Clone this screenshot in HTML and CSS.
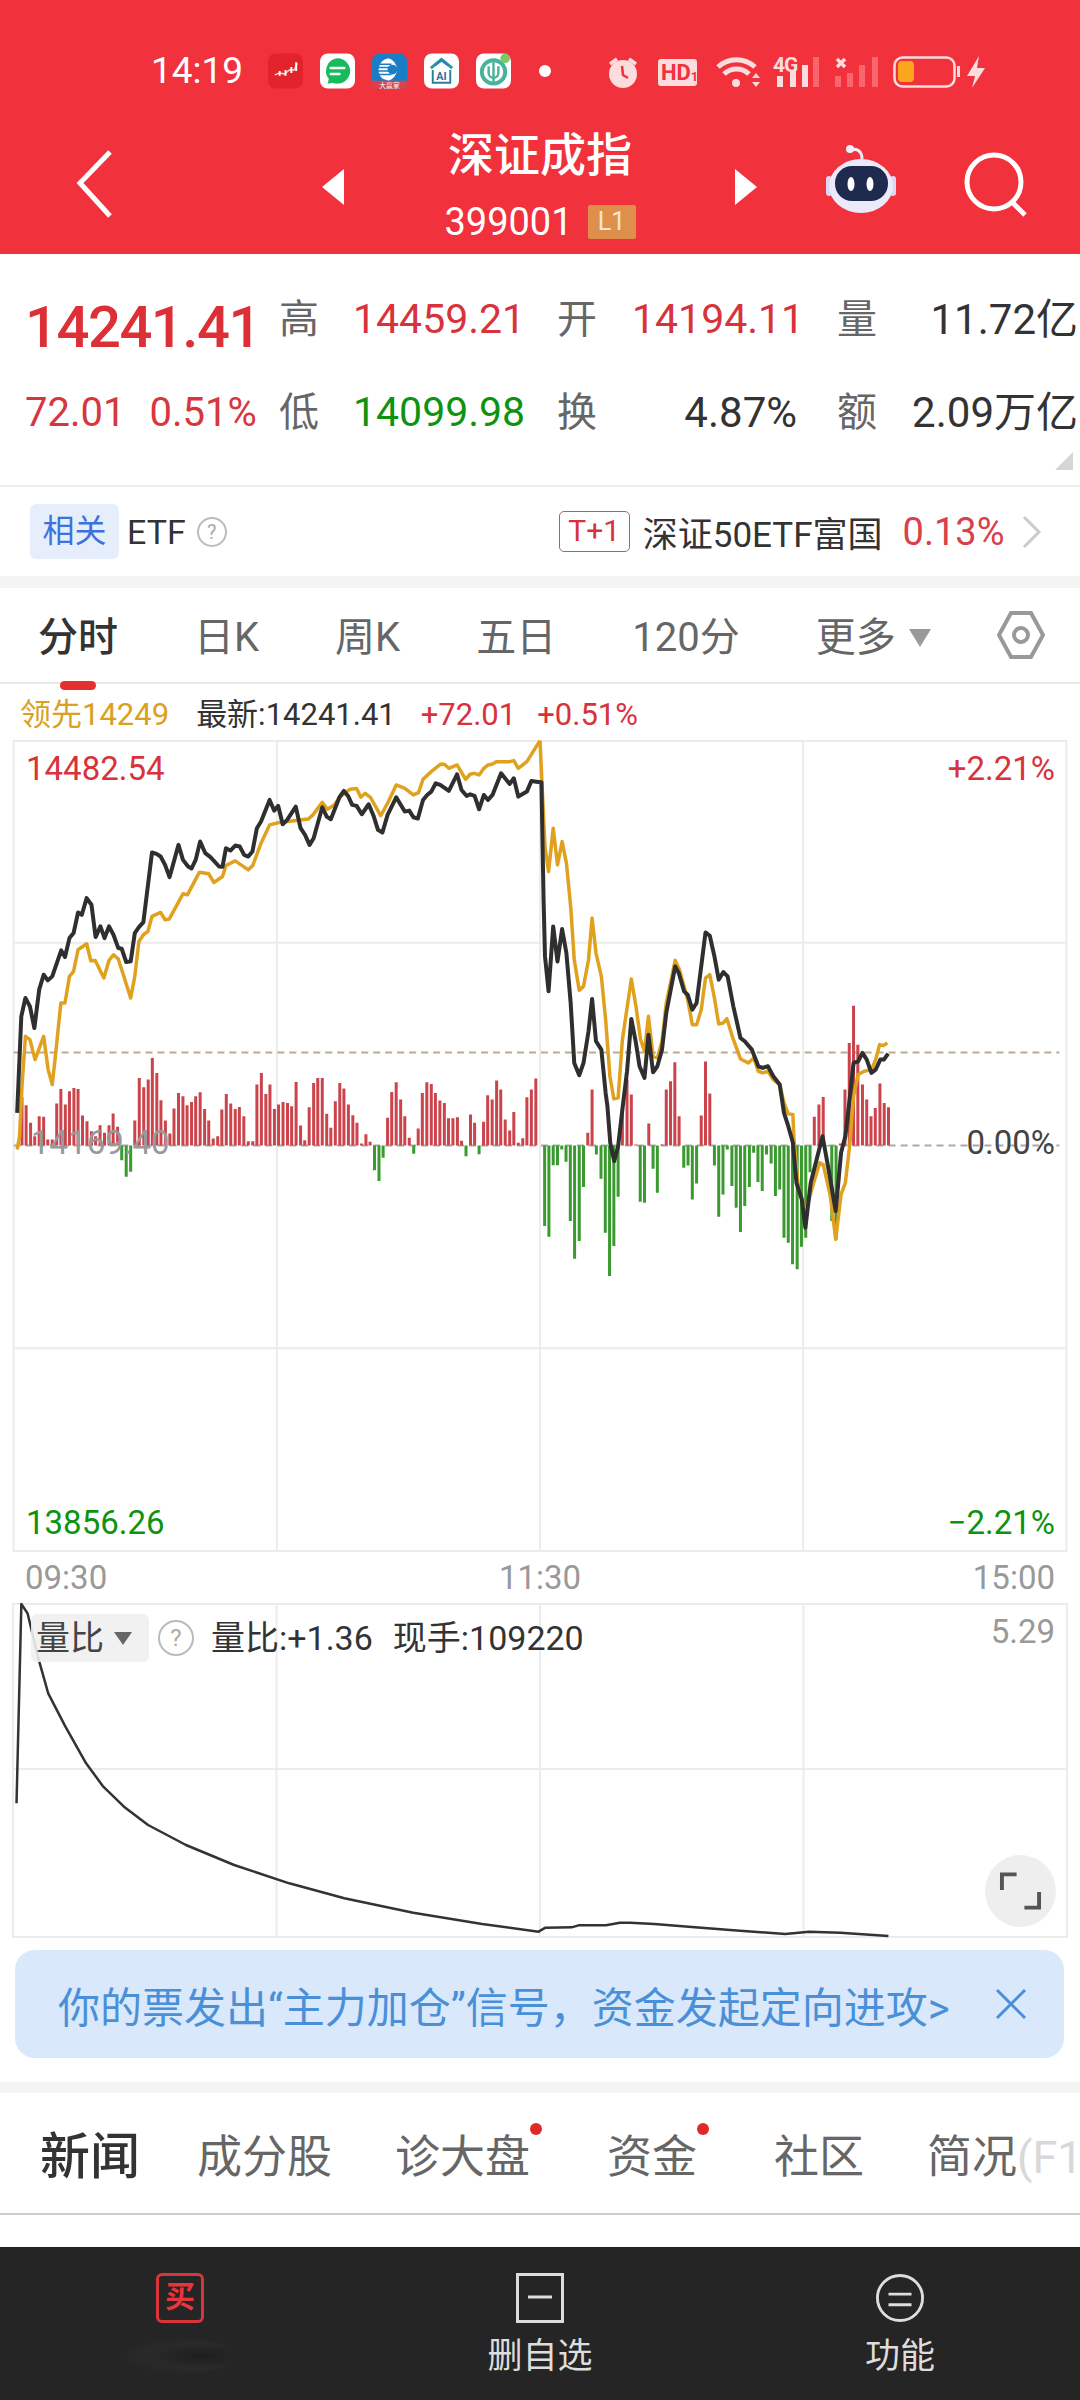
FILE: index.html
```html
<!DOCTYPE html>
<html lang="zh-CN">
<head>
<meta charset="utf-8">
<title>深证成指</title>
<link rel="stylesheet" href="styles.css">
</head>
<body>
<div class="page">
  <header class="hero">
    <div class="status">
      <span class="clock">14:19</span>
      <div class="apps">
        <svg class="app" viewBox="0 0 36 36"><rect width="36" height="36" rx="8" class="a-red"/><path d="M7 22l5-2 5 1 5-4 5 0 3-7" class="a-trend"/><path d="M12 18v5M18 17v6M24 14v6M29 9v9" class="a-candle"/></svg>
        <svg class="app" viewBox="0 0 36 36"><rect width="36" height="36" rx="8" class="a-white"/><path d="M18 5a13 13 0 1 1-5 25l-5 1 1-5a13 13 0 0 1 9-21z" class="a-green"/><path d="M11 15h14M11 21h9" class="a-wline"/></svg>
        <svg class="app" viewBox="0 0 36 36"><rect width="36" height="36" rx="8" class="a-blue"/><path d="M17 5a12 12 0 0 1 0 23l-6-2a12 12 0 0 1 6-21z" class="a-whitefill"/><path d="M7 11h13M6 14.500h13M6 18h14M7 21.500h13" class="a-bline"/><circle cx="21" cy="16.500" r="5" class="a-bdot"/><rect y="28" width="36" height="8" class="a-strip"/><text x="18" y="35" class="a-tiny">大赢家</text></svg>
        <svg class="app" viewBox="0 0 36 36"><rect width="36" height="36" rx="8" class="a-white"/><path d="M7 15L18 6l11 9" class="a-roof"/><path d="M11 12l7-5 7 5" class="a-roof2"/><path d="M9 17v13h18V17" class="a-wall"/><text x="18" y="27" class="a-ai">AI</text></svg>
        <svg class="app" viewBox="0 0 36 36"><rect width="36" height="36" rx="8" class="a-white"/><circle cx="18" cy="19" r="12" class="a-ring"/><path d="M18 9v21M13 13v7a5 5 0 0 0 10 0v-7" class="a-ringin"/><circle cx="30" cy="5" r="5" class="a-gdot"/></svg>
      </div>
      <span class="status-dot"></span>
      <svg class="sys" viewBox="598 40 400 60">
        <circle cx="623" cy="73" r="14" class="pale"/>
        <path d="M610 63l7-5M636 63l-7-5" class="pale-line"/>
        <path d="M622 65l1 9 5 3" class="hand"/>
        <rect x="658" y="58" width="39" height="27" rx="3" class="pale"/>
        <text x="661" y="79" class="hd">HD<tspan class="hd1" dy="1">1</tspan></text>
        <path d="M718 66a27 27 0 0 1 37 0M724 73a18 18 0 0 1 25 0" class="wifi"/>
        <circle cx="736" cy="82" r="4" class="pale"/>
        <path d="M752 77l4-5 4 5zM752 81l4 5 4-5z" class="pale"/>
        <text x="773" y="71" class="g4">4G</text>
        <rect x="777" y="75" width="6" height="11" class="pale"/>
        <rect x="790" y="70" width="6" height="16" class="pale"/>
        <rect x="802" y="64" width="6" height="22" class="pale"/>
        <rect x="813" y="56" width="6" height="30" class="faint"/>
        <path d="M837 58l8 8M845 58l-8 8" class="pale-line"/>
        <rect x="835" y="75" width="6" height="11" class="faint"/>
        <rect x="847" y="72" width="6" height="14" class="faint"/>
        <rect x="859" y="64" width="6" height="22" class="faint"/>
        <rect x="872" y="56" width="6" height="30" class="faint"/>
        <rect x="894.500" y="56.500" width="60" height="29" rx="8" class="batt"/>
        <rect x="898" y="60" width="16" height="21" rx="4" class="batt-fill"/>
        <rect x="957" y="65" width="3" height="11" class="pale"/>
        <path d="M979 55l-12 20h8l-3 12 13-20h-8z" class="pale"/>
      </svg>
    </div>
    <nav class="nav">
      <svg class="back" viewBox="0 0 44 70"><path d="M38 3L8 34l30 33" class="ico-w"/></svg>
      <svg class="tri tri-l" viewBox="0 0 22 36"><path d="M22 0v36L0 18z"/></svg>
      <div class="title-block">
        <div class="title">深证成指</div>
        <div class="code-row"><span class="code">399001</span><span class="lv">L1</span></div>
      </div>
      <svg class="tri tri-r" viewBox="0 0 22 36"><path d="M0 0v36l22-18z"/></svg>
      <svg class="robot" viewBox="825 145 72 70">
        <path d="M851 150c6-2 11 1 11 9" class="rb-ant"/>
        <circle cx="850" cy="149" r="4" class="rb-ball"/>
        <rect x="826" y="176" width="6" height="20" rx="3" class="rb-ear"/>
        <rect x="890" y="176" width="6" height="20" rx="3" class="rb-ear"/>
        <ellipse cx="861" cy="186" rx="32" ry="27" class="rb-body"/>
        <rect x="835" y="166" width="53" height="35" rx="17" class="rb-face"/>
        <ellipse cx="851" cy="184" rx="3.500" ry="7" class="rb-eye"/>
        <ellipse cx="870" cy="184" rx="3.500" ry="7" class="rb-eye"/>
      </svg>
      <svg class="search" viewBox="960 150 72 72"><circle cx="994" cy="184" r="27" class="ico-w"/><path d="M1012 204l13 13" class="ico-w"/></svg>
    </nav>
  </header>

  <section class="quote">
    <div class="price">14241.41</div>
    <div class="lab">高</div><div class="val up">14459.21</div>
    <div class="lab">开</div><div class="val up">14194.11</div>
    <div class="lab lab-last">量</div><div class="val end dark">11.72亿</div>
    <div class="change"><span>72.01</span><span>0.51%</span></div>
    <div class="lab">低</div><div class="val down">14099.98</div>
    <div class="lab">换</div><div class="val end dark">4.87%</div>
    <div class="lab lab-last">额</div><div class="val end dark">2.09万亿</div>
    <span class="corner"></span>
  </section>

  <section class="etf">
    <span class="chip">相关</span>
    <span class="etf-name">ETF</span>
    <span class="help">?</span>
    <span class="tplus">T+1</span>
    <span class="fund">深证50ETF富国</span>
    <span class="fund-pct">0.13%</span>
    <svg class="chev" viewBox="0 0 20 34"><path d="M2 2l15 15L2 32"/></svg>
  </section>
  <div class="band"></div>

  <nav class="period">
    <span class="p-tab active">分时</span>
    <span class="p-tab">日K</span>
    <span class="p-tab">周K</span>
    <span class="p-tab">五日</span>
    <span class="p-tab">120分</span>
    <span class="p-tab">更多</span>
    <span class="more-tri"></span>
    <svg class="gear" viewBox="0 0 48 50"><path d="M14 3h20l12 22-12 22H14L2 25z"/><circle cx="24" cy="25" r="7"/></svg>
  </nav>

  <div class="legend">
    <span class="gold">领先14249</span>
    <span class="latest">最新:14241.41</span>
    <span class="up l-change">+72.01</span>
    <span class="up l-pct">+0.51%</span>
  </div>

  <div class="chart main-chart">
    <svg class="plot" viewBox="0 740 1080 814">
      <path d="M13 741H1067M13 943H1067M13 1349H1067M13 1552H1067M13 740V1553M276.500 740V1553M540 740V1553M803.500 740V1553M1067 740V1553" class="grid"/>
      <path d="M13 1053H1060" class="dash-tan"/>
      <path d="M13 1146H1060" class="dash-grey"/>
      <g transform="translate(0 1040) scale(.34436 .33333)">
        <path class="bar-r" d="M62 318V172M74 318V197M87 318V250M99 318V290M112 318V230M125 318V232M137 318V300M150 318V300M163 318V192M175 318V148M188 318V195M200 318V155M213 318V145M225 318V148M238 318V228M251 318V245M264 318V275M276 318V290M289 318V257M302 318V280M315 318V257M327 318V222M340 318V262M390 318V243M403 318V115M416 318V143M429 318V120M441 318V55M454 318V100M466 318V182M479 318V243M492 318V282M504 318V207M517 318V160M530 318V170M542 318V197M555 318V187M567 318V170M580 318V158M593 318V208M605 318V243M618 318V297M631 318V290M643 318V210M656 318V163M669 318V192M682 318V208M694 318V202M707 318V230M720 318V305M733 318V305M745 318V135M758 318V100M771 318V163M783 318V135M796 318V208M808 318V195M821 318V187M834 318V190M846 318V200M859 318V127M872 318V258M884 318V302M897 318V203M910 318V130M922 318V115M935 318V115M948 318V223M960 318V265M973 318V185M986 318V130M998 318V147M1011 318V195M1024 318V227M1036 318V250M1049 318V312M1062 318V284M1074 318V307M1125 318V235M1137 318V157M1150 318V128M1163 318V180M1175 318V230M1188 318V295M1214 318V267M1226 318V160M1239 318V128M1252 318V133M1264 318V160M1277 318V183M1290 318V190M1302 318V236M1315 318V236M1328 318V233M1340 318V304M1366 318V225M1378 318V250M1404 318V247M1416 318V167M1429 318V180M1442 318V123M1454 318V150M1467 318V240M1480 318V273M1492 318V217M1505 318V310M1518 318V296M1530 318V173M1543 318V150M1556 318V117"/>
        <path class="bar-g" d="M352 318V362M365 318V412M378 318V397M1087 318V392M1100 318V425M1112 318V355M1201 318V343M1353 318V350M1391 318V344"/>
      </g>
      <g transform="translate(520 1040) scale(.35714 .33333)">
        <path class="bar-r" d="M190 318V280M202 318V150M287 318V208M300 318V120M312 318V165M324 318V315M361 318V252M398 318V315M410 318V150M422 318V125M434 318V68M446 318V230M508 318V228M520 318V66M532 318V162M825 318V232M838 318V195M850 318V172M898 318V312M911 318V150M923 318V10M935 318V-102M947 318V15M960 318V135M972 318V180M984 318V230M996 318V205M1009 318V132M1021 318V190M1033 318V203"/>
        <path class="bar-g" d="M69 318V560M81 318V592M93 318V377M105 318V377M117 318V330M129 318V367M141 318V545M153 318V658M166 318V605M178 318V443M214 318V345M227 318V418M239 318V580M251 318V710M263 318V620M275 318V472M337 318V487M349 318V490M373 318V388M385 318V460M459 318V385M471 318V378M483 318V480M495 318V432M545 318V378M557 318V532M569 318V465M581 318V330M594 318V440M606 318V505M618 318V578M630 318V500M643 318V443M655 318V340M667 318V428M679 318V455M691 318V345M704 318V372M716 318V470M728 318V450M740 318V595M752 318V610M764 318V675M777 318V690M789 318V622M801 318V595M813 318V398M862 318V320M874 318V545M886 318V600"/>
      </g>
      <g transform="translate(0 720) scale(.34436 .33333)">
        <polyline class="ln-gold" points="48,1290 55,1250 62,1100 72,950 85,960 100,1020 125,950 138,1050 150,1095 160,1000 175,850 187,850 200,770 212,755 225,690 250,672 262,723 275,722 300,775 315,722 328,705 342,718 355,760 378,835 390,770 402,665 415,645 428,635 440,590 465,578 478,600 490,598 530,522 543,525 578,457 605,462 620,488 645,470 655,437 682,423 720,450 733,437 757,370 782,315 810,308 835,305 870,300 895,297 908,285 935,247 950,268 970,255 985,232 1015,208 1035,206 1047,232 1060,220 1075,232 1105,287 1125,250 1150,195 1175,205 1200,225 1215,218 1228,178 1252,155 1278,133 1290,133 1303,145 1327,135 1352,178 1365,163 1378,160 1391,165 1405,145 1417,135 1430,132 1442,125 1480,125 1492,122 1505,145 1530,125 1568,62"/>
      </g>
      <g transform="translate(520 720) scale(.35714 .33333)">
        <polyline class="ln-gold" points="56,62 62,200 70,380 80,455 93,325 105,435 118,365 130,430 142,560 152,720 166,812 178,800 192,720 202,595 213,700 228,770 240,900 252,1070 263,1138 275,1135 287,960 312,778 325,860 338,960 349,995 360,890 373,1010 385,1015 398,965 410,850 435,722 447,750 470,840 483,915 495,915 508,870 520,775 532,765 545,835 557,913 570,910 580,897 595,950 618,1018 640,1030 655,1015 668,1055 680,1060 695,1055 710,1080 728,1095 740,1150 752,1183 765,1185 768,1260 780,1400 800,1480 815,1420 840,1330 850,1335 870,1430 885,1560 900,1425 912,1390 925,1270 935,1130 948,1065 965,1055 985,1050 997,1020 1008,975 1018,978 1030,970"/>
      </g>
      <g transform="translate(0 720) scale(.34436 .33333)">
        <polyline class="ln-black" points="48,1180 60,890 72,835 85,860 98,925 112,810 125,765 137,782 150,770 176,692 187,712 200,655 212,640 225,578 236,585 250,535 264,555 276,652 290,620 302,655 315,620 328,645 342,685 352,687 365,727 378,725 390,640 402,622 415,607 440,398 453,402 465,410 478,435 491,472 517,375 530,420 545,440 555,446 567,420 580,365 595,400 610,412 635,440 645,441 655,385 668,392 682,377 695,380 708,405 720,410 732,395 745,325 757,305 782,240 795,272 807,258 820,313 833,300 858,260 872,325 885,345 898,375 910,355 935,262 948,290 960,298 985,232 998,213 1010,228 1022,255 1035,258 1050,283 1070,253 1085,290 1097,330 1110,338 1125,285 1150,232 1175,275 1188,272 1200,292 1213,296 1228,240 1240,225 1252,215 1265,190 1278,195 1303,213 1327,163 1340,210 1355,228 1365,223 1378,228 1391,268 1405,225 1417,240 1430,225 1455,160 1480,192 1492,175 1505,230 1530,215 1543,183 1568,187"/>
      </g>
      <g transform="translate(520 720) scale(.35714 .33333)">
        <polyline class="ln-black" points="56,187 60,187 66,540 70,710 80,815 93,620 105,725 118,628 130,700 142,850 152,1030 166,1067 178,1030 192,935 202,838 213,965 228,990 240,1120 245,1160 253,1270 264,1325 275,1280 288,1160 300,1055 312,898 325,970 335,1040 349,1075 360,945 373,1058 385,1040 398,990 410,880 435,740 445,760 460,815 470,825 483,870 495,850 520,638 532,648 545,710 557,780 570,757 582,770 598,860 618,955 630,965 650,990 668,1040 680,1045 695,1040 710,1070 728,1095 740,1180 752,1220 765,1270 775,1390 790,1440 800,1525 815,1390 848,1250 865,1350 885,1475 900,1300 912,1250 925,1130 935,1030 948,1025 960,1000 972,1020 985,1060 997,1050 1010,1020 1020,1020 1032,1002"/>
      </g>
    </svg>
    <span class="ch-label tl up">14482.54</span>
    <span class="ch-label tr up">+2.21%</span>
    <span class="ch-label ml">14169.40</span>
    <span class="ch-label mr">0.00%</span>
    <span class="ch-label bl down">13856.26</span>
    <span class="ch-label br down">−2.21%</span>
  </div>

  <div class="axis"><span>09:30</span><span>11:30</span><span>15:00</span></div>

  <div class="chart sub-chart">
    <svg class="plot" viewBox="0 1603 1080 335">
      <path d="M13 1604H1067M13 1769H1067M13 1937H1067M13 1603V1938M276.500 1603V1938M540 1603V1938M803.500 1603V1938M1067 1603V1938" class="grid"/>
      <g transform="translate(0 1500) scale(.68870 .33333)">
        <polyline class="ln-sub" points="24,910 31,312 40,340 55,470 70,580 95,680 125,790 150,860 180,920 215,975 270,1035 340,1095 420,1150 500,1195 600,1238 700,1272 782,1295 792,1283 830,1282 840,1276 880,1276 900,1268 915,1268 950,1272 1000,1280 1060,1290 1140,1302 1175,1295 1220,1298 1290,1308"/>
      </g>
    </svg>
    <div class="sub-head">
      <span class="sub-chip">量比<i class="chip-tri"></i></span>
      <span class="sub-help">?</span>
      <span class="sub-read">量比:+1.36</span>
      <span class="sub-read">现手:109220</span>
    </div>
    <span class="sub-max">5.29</span>
    <button class="expand"><svg viewBox="0 0 44 44"><path d="M3 21V5h15M41 23v16H26"/></svg></button>
  </div>

  <div class="banner-wrap">
    <div class="banner">
      <span class="banner-text">你的票发出“主力加仓”信号，资金发起定向进攻&gt;</span>
      <svg class="banner-x" viewBox="0 0 32 32"><path d="M2 2l28 28M30 2L2 30"/></svg>
    </div>
  </div>
  <div class="band band-low"></div>

  <nav class="news">
    <span class="n-tab active">新闻</span>
    <span class="n-tab">成分股</span>
    <span class="n-tab dot">诊大盘</span>
    <span class="n-tab dot">资金</span>
    <span class="n-tab">社区</span>
    <span class="n-tab">简况<span class="fade">(F10)</span></span>
  </nav>
  <div class="gap"></div>

  <footer class="dock">
    <div class="dock-item">
      <span class="buy-ico">买</span>
      <span class="smudge"></span>
    </div>
    <div class="dock-item">
      <svg class="dock-ico" viewBox="0 0 48 50"><rect x="1.500" y="1.500" width="45" height="47"/><path d="M12 24h24"/></svg>
      <span class="dock-label">删自选</span>
    </div>
    <div class="dock-item">
      <svg class="dock-ico" viewBox="0 0 50 50"><circle cx="25" cy="25" r="23.500"/><path d="M13 21h24M13 32h24"/></svg>
      <span class="dock-label">功能</span>
    </div>
  </footer>
</div>
</body>
</html>
```

FILE: styles.css
```css
* { box-sizing: border-box; }
html, body { margin: 0; padding: 0; background: #fff; }
body { font-family: Roboto, "Noto Sans CJK SC", sans-serif; color: #333; }
.page { width: 1080px; height: 2400px; overflow: hidden; display: flex; flex-direction: column; }

/* header */
.hero { height: 254px; background: #f1313b; color: #fff; flex: none; }
.status { display: flex; align-items: center; height: 135px; padding: 0 0 0 151px; }
.status > * { margin-top: 6px; }
.clock { font-size: 37px; width: 92px; line-height: 1; flex: none; }
.apps { display: flex; gap: 17px; margin-left: 25px; }
.app { width: 35px; height: 36px; display: block; }
.a-red { fill: #e2232c; }
.a-white { fill: #fff; }
.a-blue { fill: #1a7dc6; }
.a-trend { fill: none; stroke: #fbd6d6; stroke-width: 1.5; }
.a-candle { fill: none; stroke: #fff; stroke-width: 2; }
.a-green { fill: #17bb5c; }
.a-wline { stroke: #fff; stroke-width: 2.500; stroke-linecap: round; fill: none; }
.a-whitefill { fill: #fff; }
.a-bline { stroke: #1a7dc6; stroke-width: 1.500; fill: none; }
.a-bdot { fill: #1a7dc6; }
.a-strip { fill: #d9424d; }
.a-tiny { font-size: 7px; fill: #fff; text-anchor: middle; }
.a-roof { fill: none; stroke: #2c9f7e; stroke-width: 3; }
.a-roof2 { fill: none; stroke: #2f7fc4; stroke-width: 2.500; }
.a-wall { fill: none; stroke: #2b7f9e; stroke-width: 2; }
.a-ai { font-size: 11px; font-weight: 700; fill: #2b6f9e; text-anchor: middle; }
.a-ring { fill: none; stroke: #48b39a; stroke-width: 4; }
.a-ringin { fill: none; stroke: #48b39a; stroke-width: 2.500; }
.a-gdot { fill: #7cc96a; }
.status-dot { width: 12px; height: 12px; border-radius: 50%; background: #fff; margin-left: 28px; flex: none; }
.sys { width: 400px; height: 60px; margin-left: 47px; flex: none; display: block; }
.pale { fill: #fcdcdc; }
.faint { fill: #f9666d; }
.pale-line { stroke: #fcdcdc; stroke-width: 3.500; fill: none; }
.hand { stroke: #f1313b; stroke-width: 2.500; fill: none; }
.hd { font-size: 22px; font-weight: 700; fill: #f1313b; font-family: Roboto, sans-serif; }
.hd1 { font-size: 13px; }
.wifi { fill: none; stroke: #fcdcdc; stroke-width: 5; }
.g4 { font-size: 21px; font-weight: 700; fill: #fcdcdc; font-family: Roboto, sans-serif; letter-spacing: -1px; }
.batt { fill: none; stroke: #fcdcdc; stroke-width: 2.500; }
.batt-fill { fill: #fba61c; }

.nav { display: flex; align-items: center; height: 119px; padding: 0 0 21px 72px; }
.back { width: 44px; height: 70px; flex: none; }
.ico-w { fill: none; stroke: #fff; stroke-width: 5; }
.tri { width: 22px; height: 36px; flex: none; fill: #fff; margin-top: 6px; }
.tri-l { margin-left: 206px; }
.title-block { width: 190px; margin: 3px 0 0 101px; display: flex; flex-direction: column; align-items: center; flex: none; }
.title { font-size: 46px; line-height: 48px; font-weight: 500; }
.code-row { display: flex; align-items: center; gap: 15px; margin-top: 25px; }
.code { font-size: 38px; line-height: 36px; }
.lv { width: 48px; height: 34px; background: #de8f4b; color: #fde6d2; font-size: 25px; line-height: 34px; text-align: center; border-radius: 2px; }
.tri-r { margin-left: 100px; }
.robot { width: 72px; height: 70px; margin: 0 0 8px 68px; flex: none; }
.rb-ant { fill: none; stroke: #ece8f8; stroke-width: 3; }
.rb-ball { fill: #f3eefb; }
.rb-ear { fill: #dcd8f4; }
.rb-body { fill: #ece9fa; }
.rb-face { fill: #1f2b4e; }
.rb-eye { fill: #fff; }
.search { width: 72px; height: 72px; margin-left: 63px; flex: none; }

/* quote */
.quote { position: relative; height: 231px; flex: none; padding-top: 19px; display: grid; grid-template-columns: 279px 74px 204px 75px 165px 113px 168px; grid-template-rows: 93px 93px; align-items: center; }
.price { font-size: 58px; font-weight: 500; color: #dd2f36; padding: 14px 0 0 25px; letter-spacing: -1.500px; line-height: 1; }
.change { display: flex; gap: 24px; padding-left: 25px; font-size: 40px; color: #d8363e; line-height: 1; }
.lab { font-size: 40px; color: #666; line-height: 1; }
.lab-last { padding-left: 40px; }
.val { font-size: 41px; line-height: 1; }
.end { text-align: right; white-space: nowrap; }
.dark.val { font-size: 42px; }
.up { color: #d8323a; }
.down { color: #0d930f; }
.dark { color: #333; }
.corner { position: absolute; right: 7px; bottom: 15px; width: 0; height: 0; border-left: 18px solid transparent; border-bottom: 18px solid #d6d6d6; }

/* etf */
.etf { height: 91px; flex: none; border-top: 2px solid #eee; display: flex; align-items: center; padding-left: 30px; }
.chip { width: 89px; height: 55px; background: #e6eefc; color: #3b72dc; font-size: 32px; line-height: 55px; text-align: center; border-radius: 6px; }
.etf-name { font-size: 34px; margin-left: 8px; color: #333; }
.help { width: 30px; height: 30px; border: 2px solid #bbb; color: #aaa; border-radius: 50%; font-size: 20px; line-height: 26px; text-align: center; margin-left: 11px; }
.tplus { width: 71px; height: 41px; border: 1.500px solid #d0525a; border-radius: 5px; color: #d8323a; font-size: 30px; line-height: 38px; text-align: center; margin-left: 332px; }
.fund { font-size: 35px; margin-left: 13px; color: #333; white-space: nowrap; }
.fund-pct { font-size: 38px; color: #d8404a; margin-left: 20px; }
.chev { width: 20px; height: 34px; margin-left: 18px; fill: none; stroke: #ccc; stroke-width: 3; flex: none; }
.band { height: 12px; background: #f4f4f4; flex: none; }

/* period tabs */
.period { height: 96px; flex: none; border-bottom: 2px solid #e8e8e8; display: flex; align-items: center; gap: 76px; padding: 5px 0 0 38px; }
.p-tab { position: relative; font-size: 40px; line-height: 1; color: #666; white-space: nowrap; }
.p-tab.active { color: #333; font-weight: 500; }
.p-tab.active::after { content: ""; position: absolute; left: 22px; top: 63px; width: 36px; height: 9px; border-radius: 5px; background: #e5302f; }
.more-tri { width: 0; height: 0; margin-left: -63px; border-left: 11px solid transparent; border-right: 11px solid transparent; border-top: 18px solid #999; }
.gear { width: 48px; height: 50px; margin: -6px 0 0 -10px; fill: none; stroke: #999; stroke-width: 4; flex: none; }

.legend { height: 56px; flex: none; display: flex; align-items: center; padding: 5px 0 0 20px; font-size: 31px; line-height: 1; white-space: nowrap; }
.gold { color: #d9a11f; }
.latest { color: #333; margin-left: 27px; }
.l-change { margin-left: 25px; }
.l-pct { margin-left: 21px; }

/* charts */
.chart { position: relative; flex: none; }
.main-chart { height: 813px; }
.sub-chart { height: 335px; }
.plot { width: 1080px; height: 100%; display: block; overflow: visible; }
.grid { fill: none; stroke: #ececec; stroke-width: 2; }
.dash-tan { fill: none; stroke: #bda98f; stroke-width: 2; stroke-dasharray: 7 5; }
.dash-grey { fill: none; stroke: #aaa; stroke-width: 2; stroke-dasharray: 7 5; }
.bar-r, .bar-g, .ln-gold, .ln-black, .ln-sub { fill: none; vector-effect: non-scaling-stroke; }
.bar-r { stroke: #cb444c; stroke-width: 3; }
.bar-g { stroke: #3a9a2f; stroke-width: 3; }
.ln-gold { stroke: #e0a11e; stroke-width: 3.500; stroke-linejoin: round; }
.ln-black { stroke: #2f2f2f; stroke-width: 4; stroke-linejoin: round; }
.ln-sub { stroke: #333; stroke-width: 2.500; stroke-linejoin: round; }
.ch-label { position: absolute; font-size: 33px; line-height: 40px; white-space: nowrap; }
.tl { left: 26px; top: 9px; }
.tr { right: 25px; top: 9px; }
.ml { left: 31px; top: 383px; color: #999; }
.mr { right: 25px; top: 383px; color: #444; }
.bl { left: 26px; top: 763px; }
.br { right: 25px; top: 763px; }

.axis { height: 50px; flex: none; display: flex; justify-content: space-between; padding: 5px 25px 0; font-size: 33px; line-height: 40px; color: #999; }

.sub-head { position: absolute; left: 31px; top: 11px; display: flex; align-items: center; font-size: 34px; line-height: 48px; color: #333; white-space: nowrap; }
.sub-chip { display: flex; align-items: center; width: 118px; height: 48px; padding-left: 5px; background: rgba(240,240,240,.9); border-radius: 6px; color: #444; }
.chip-tri { width: 0; height: 0; margin-left: 10px; border-left: 9px solid transparent; border-right: 9px solid transparent; border-top: 13px solid #666; }
.sub-help { width: 36px; height: 36px; margin-left: 9px; border: 2px solid #bbb; border-radius: 50%; color: #aaa; font-size: 24px; line-height: 32px; text-align: center; }
.sub-read { margin-left: 17px; }
.sub-read + .sub-read { margin-left: 20px; }
.sub-max { position: absolute; right: 25px; top: 9px; font-size: 33px; line-height: 40px; color: #999; }
.expand { position: absolute; left: 985px; top: 252px; width: 71px; height: 72px; padding: 14px; border: 0; border-radius: 50%; background: #eee; }
.expand svg { display: block; width: 100%; height: 100%; fill: none; stroke: #555; stroke-width: 4; }

.banner-wrap { height: 144px; flex: none; padding: 12px 16px 24px 15px; }
.banner { height: 108px; background: #d9e8fa; border-radius: 20px; display: flex; align-items: center; padding: 0 37px 0 43px; justify-content: space-between; }
.banner-text { font-size: 42px; color: #4a90d9; white-space: nowrap; }
.banner-x { width: 32px; height: 32px; fill: none; stroke: #4a90d9; stroke-width: 3; flex: none; }
.band-low { height: 11px; }

/* news tabs */
.news { height: 122px; flex: none; border-bottom: 2px solid #ccc; display: flex; align-items: center; padding: 8px 0 0 40px; white-space: nowrap; overflow: hidden; gap: 63px; }
.n-tab { position: relative; font-size: 45px; line-height: 1; color: #666; }
.n-tab.active { font-size: 50px; font-weight: 500; color: #333; margin-right: -6px; }
.n-tab.active::after { content: ""; position: absolute; left: 20px; top: 84px; width: 60px; height: 12px; border-radius: 6px; background: #ef3a2e; }
.n-tab.dot { margin-right: 14px; }
.n-tab.dot::after { content: ""; position: absolute; right: -12px; top: -12px; width: 12px; height: 12px; border-radius: 50%; background: #e02a2a; }
.fade { color: #d8d8d8; }
.gap { height: 32px; flex: none; }

/* dock */
.dock { height: 153px; flex: none; background: #252525; display: grid; grid-template-columns: repeat(3, 1fr); }
.dock-item { display: flex; flex-direction: column; align-items: center; padding-top: 26px; }
.dock-ico { width: 48px; height: 50px; fill: none; stroke: #ddd; stroke-width: 3; display: block; }
.dock-label { font-size: 35px; line-height: 44px; margin-top: 12px; color: #ddd; }
.buy-ico { width: 48px; height: 50px; border: 3px solid #d8343c; border-radius: 6px; color: #e8343c; font-size: 30px; font-weight: 700; line-height: 42px; text-align: center; }
.smudge { width: 110px; height: 36px; margin-top: 15px; border-radius: 50%; background: radial-gradient(ellipse at 70% 50%, #1e1e1e, #2a2a2a 50%, #252525 75%); }
```
